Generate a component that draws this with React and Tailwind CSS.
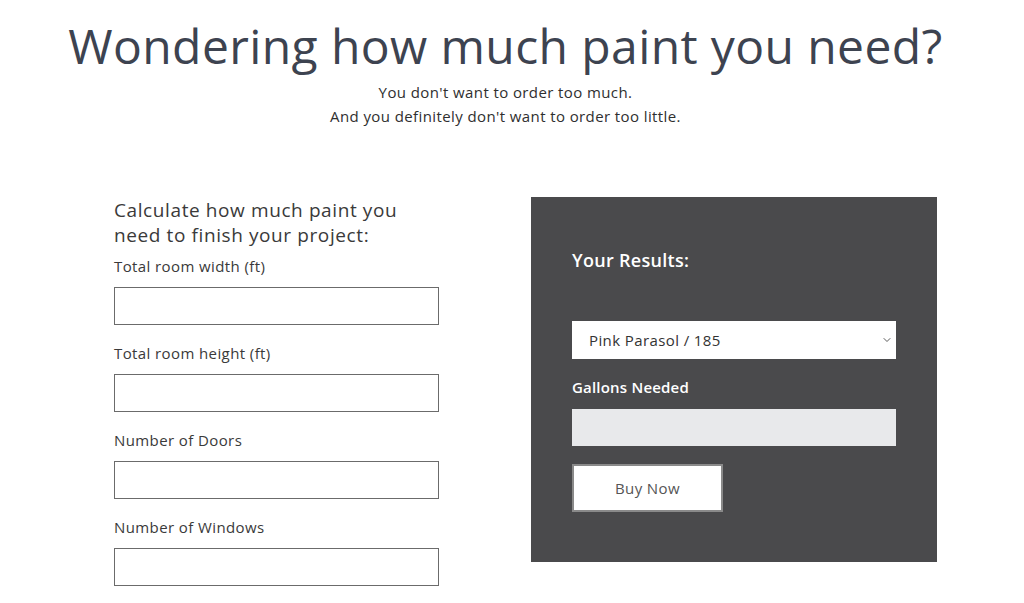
import { ChevronDown } from "lucide-react";

const fields = [
  "Total room width (ft)",
  "Total room height (ft)",
  "Number of Doors",
  "Number of Windows",
];

const Field = ({ label }) => (
  <div className="flex flex-col">
    <label className="text-[15px] leading-[20px] tracking-[0.4px] text-[#3a3a3a] h-[21px]">{label}</label>
    <input
      type="text"
      className="mt-[10px] w-[325px] h-[38px] border border-[#6b6b6b] bg-white outline-none"
    />
  </div>
);

export default function App() {
  return (
    <div
      className="w-[1024px] h-[603px] bg-white overflow-hidden"
      style={{ fontFamily: "'Open Sans', 'Liberation Sans', sans-serif" }}
    >
      <div className="pt-[16px] pr-[13px] text-center">
        <h1 className="text-[48px] leading-[60px] text-[#3d4350] tracking-[0.4px]">
          Wondering how much paint you need?
        </h1>
        <p className="mt-[4px] text-[15px] leading-[24px] tracking-[0.4px] text-[#2f2f2f]">
          You don't want to order too much.
        </p>
        <p className="text-[15px] leading-[24px] tracking-[0.4px] text-[#2f2f2f]">
          And you definitely don't want to order too little.
        </p>
      </div>

      <div className="flex pl-[114px] gap-[92px] mt-[69px]">
        <div className="w-[325px] flex flex-col">
          <h2 className="text-[19px] leading-[25px] tracking-[0.6px] text-[#3a3a3a] mt-[1px]">
            Calculate how much paint you
            <br />
            need to finish your project:
          </h2>
          <div className="mt-[8px] flex flex-col gap-[18px]">
            {fields.map((f) => (
              <Field key={f} label={f} />
            ))}
          </div>
        </div>

        <div className="w-[406px] h-[365px] bg-[#4a4a4c] px-[41px] pt-[50px]">
          <h3 className="text-[18px] leading-[26px] tracking-[0.3px] font-semibold text-white">Your Results:</h3>
          <div className="mt-[48px] w-[324px] h-[38px] bg-white flex items-center justify-between pl-[17px] pr-[3px]">
            <span className="text-[15px] tracking-[0.4px] text-[#333]">Pink Parasol / 185</span>
            <ChevronDown size={12} strokeWidth={1.75} className="text-[#444]" />
          </div>
          <div className="mt-[18px] text-[15px] leading-[20px] tracking-[0.2px] font-semibold text-white">
            Gallons Needed
          </div>
          <div className="mt-[12px] w-[324px] h-[37px] bg-[#e8e9eb]" />
          <button className="mt-[18px] w-[151px] h-[48px] bg-white border-2 border-[#8a8a8a] text-[15px] tracking-[0.4px] text-[#555]">
            Buy Now
          </button>
        </div>
      </div>
    </div>
  );
}
